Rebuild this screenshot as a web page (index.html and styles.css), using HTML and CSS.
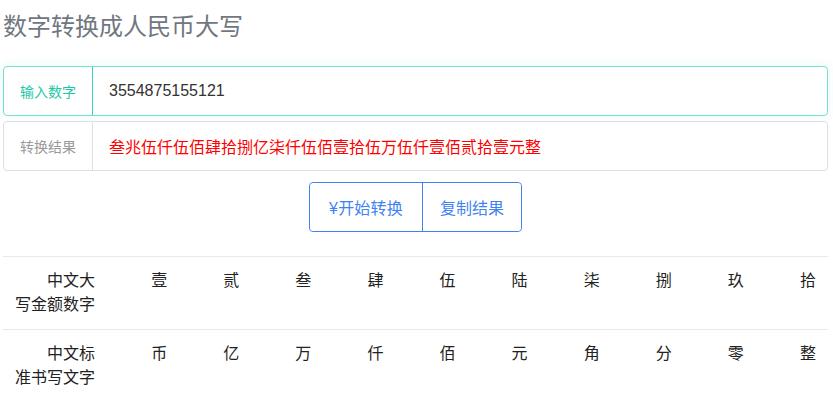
FILE: index.html
```html
<!DOCTYPE html>
<html lang="zh-CN">
<head>
    <meta charset="UTF-8">
    <meta name="viewport" content="width=device-width, initial-scale=1.0">
    <title>数字转换成人民币大写</title>
    <link rel="stylesheet" href="styles.css">
</head>
<body>
    <div class="page">
        <h1 class="title">数字转换成人民币大写</h1>

        <div class="field field-active">
            <label class="field-label">输入数字</label>
            <div class="field-value">3554875155121</div>
        </div>

        <div class="field">
            <label class="field-label">转换结果</label>
            <div class="field-value result">叁兆伍仟伍佰肆拾捌亿柒仟伍佰壹拾伍万伍仟壹佰贰拾壹元整</div>
        </div>

        <div class="actions">
            <div class="btn-group">
                <button class="btn">¥开始转换</button>
                <button class="btn">复制结果</button>
            </div>
        </div>

        <table class="chars">
            <tr>
                <th>中文大<br>写金额数字</th>
                <td>壹</td><td>贰</td><td>叁</td><td>肆</td><td>伍</td>
                <td>陆</td><td>柒</td><td>捌</td><td>玖</td><td>拾</td>
            </tr>
            <tr>
                <th>中文标<br>准书写文字</th>
                <td>币</td><td>亿</td><td>万</td><td>仟</td><td>佰</td>
                <td>元</td><td>角</td><td>分</td><td>零</td><td>整</td>
            </tr>
        </table>
    </div>
</body>
</html>
```

FILE: styles.css
```css
body {
    margin: 0;
    font-family: "Liberation Sans", "Noto Sans CJK SC", sans-serif;
    color: #333;
    background: #fff;
}
.page {
    padding: 0 5px 0 3px;
}
.title {
    margin: 9px 0 21px;
    font-size: 24px;
    line-height: 36px;
    font-weight: normal;
    color: #70777f;
}
.field {
    display: flex;
    height: 48px;
    margin-bottom: 5px;
    border: 1px solid #dcdfe6;
    border-radius: 4px;
    background: #fff;
}
.field-active {
    border-color: #74e2cb;
    box-shadow: 0 0 12px rgba(120, 215, 200, 0.18);
}
.field-label {
    flex: 0 0 88px;
    display: flex;
    align-items: center;
    justify-content: center;
    border-right: 1px solid #dcdfe6;
    font-size: 14px;
    color: #999;
}
.field-active .field-label {
    border-right-color: #3cd3b5;
    color: #1fc7a6;
}
.field-value {
    display: flex;
    align-items: center;
    padding-left: 16px;
    font-size: 16px;
    color: #333;
}
.result {
    color: #f00;
}
.actions {
    display: flex;
    justify-content: center;
    margin-top: 11px;
}
.btn-group {
    display: flex;
    border: 1px solid #3f83f3;
    border-radius: 4px;
}
.btn {
    height: 48px;
    border: none;
    background: #fff;
    font-family: inherit;
    font-size: 16px;
    color: #3f83f3;
}
.btn:first-child {
    border-radius: 4px 0 0 4px;
    padding: 0 19px 0 19px;
    letter-spacing: 0.2px;
}
.btn:last-child {
    border-left: 1px solid #3f83f3;
    border-radius: 0 4px 4px 0;
    padding: 0 17px;
}
.chars {
    width: 825px;
    margin-top: 24px;
    border-collapse: collapse;
    font-size: 16px;
    line-height: 24px;
}
.chars tr {
    border-top: 1px solid #e8e9f0;
}
.chars th,
.chars td {
    padding: 12px 12px 12px 0;
    text-align: right;
    vertical-align: top;
    font-weight: normal;
    color: #222;
}
.chars th {
    width: 80px;
    padding-left: 12px;
}
.chars td {
    width: 60px;
}
```
